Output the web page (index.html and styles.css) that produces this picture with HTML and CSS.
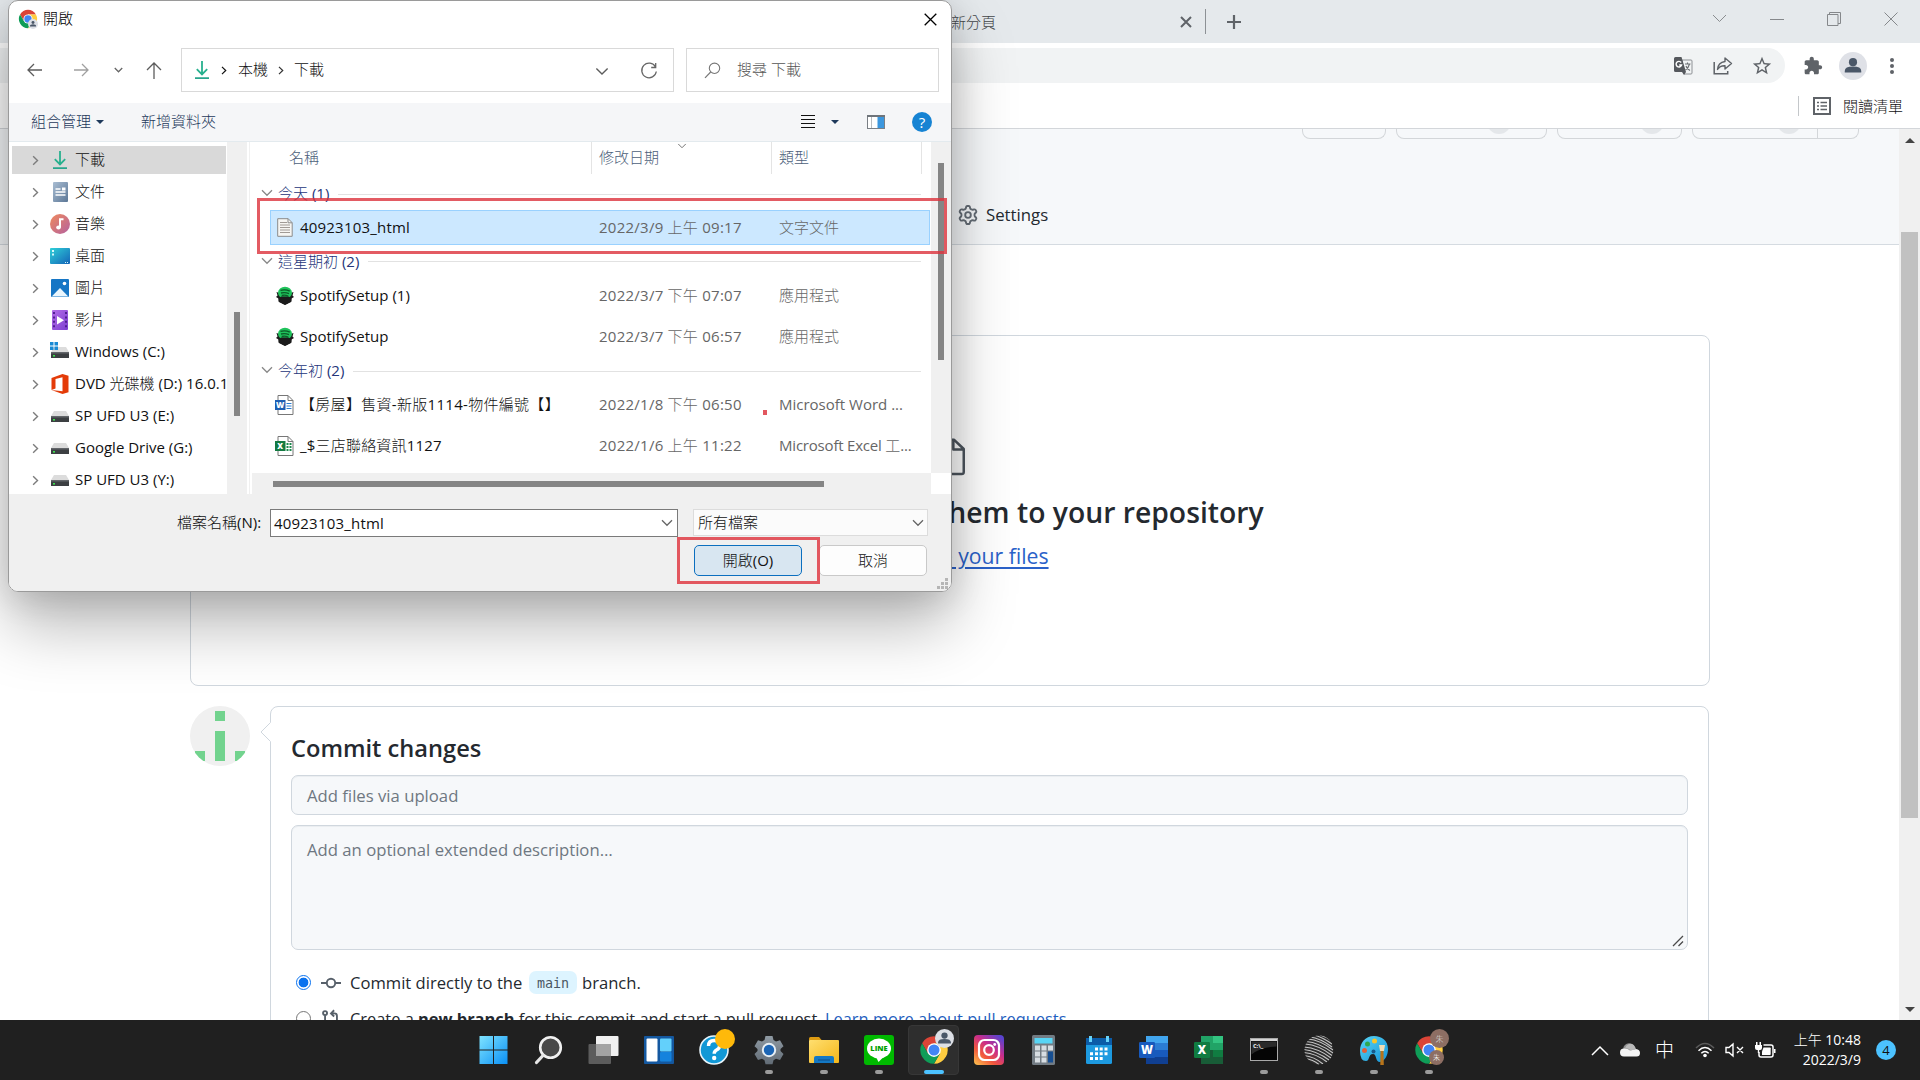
FILE: index.html
```html
<!DOCTYPE html>
<html lang="zh-Hant">
<head>
<meta charset="utf-8">
<title>開啟</title>
<link rel="stylesheet" href="styles.css">
</head>
<body>
<svg class="defs" width="0" height="0">
  <defs>
    <linearGradient id="g-win" x1="0" y1="0" x2="1" y2="1"><stop offset="0" stop-color="#7fe3ff"/><stop offset="1" stop-color="#0a90f5"/></linearGradient>
    <linearGradient id="g-music" x1="0" y1="0" x2="1" y2="1"><stop offset="0" stop-color="#f08a5d"/><stop offset="1" stop-color="#b4619f"/></linearGradient>
    <linearGradient id="g-desk" x1="0" y1="0" x2="1" y2="1"><stop offset="0" stop-color="#2fd0d8"/><stop offset="1" stop-color="#1464b8"/></linearGradient>
    <linearGradient id="g-doc" x1="0" y1="0" x2="1" y2="1"><stop offset="0" stop-color="#a9bdd2"/><stop offset="1" stop-color="#5c7796"/></linearGradient>
    <linearGradient id="g-vid" x1="0" y1="0" x2="1" y2="1"><stop offset="0" stop-color="#b36be8"/><stop offset="1" stop-color="#7d3fd0"/></linearGradient>
    <linearGradient id="g-fold" x1="0" y1="0" x2="1" y2="1"><stop offset="0" stop-color="#ffdf70"/><stop offset="1" stop-color="#f4b619"/></linearGradient>
    <linearGradient id="g-ig" x1="0" y1="1" x2=".8" y2="0"><stop offset="0" stop-color="#fdc84f"/><stop offset=".35" stop-color="#f2583c"/><stop offset=".65" stop-color="#c82d8c"/><stop offset="1" stop-color="#5a43cf"/></linearGradient>
    <linearGradient id="g-pal" x1="0" y1="0" x2="1" y2="1"><stop offset="0" stop-color="#58d5f5"/><stop offset="1" stop-color="#1593d8"/></linearGradient>
    <linearGradient id="g-gear" x1="0" y1="0" x2="0" y2="1"><stop offset="0" stop-color="#8f9aa3"/><stop offset="1" stop-color="#626c76"/></linearGradient>
    <symbol id="chrome" viewBox="0 0 48 48">
      <path fill="#db4437" d="M24 24L14.47 29.5 4.95 13A22 22 0 0 1 43.05 13H24z"/>
      <path fill="#ffcd40" d="M24 13H43.05A22 22 0 0 1 24 46L33.53 29.5 24 24z"/>
      <path fill="#0f9d58" d="M33.53 29.5L24 46A22 22 0 0 1 4.95 13L14.47 29.5 24 24z"/>
      <circle cx="24" cy="24" r="11" fill="#fff"/><circle cx="24" cy="24" r="8.8" fill="#4285f4"/>
    </symbol>
    <symbol id="dl" viewBox="0 0 16 20"><path d="M8 1v13M2.8 9.2L8 14.4l5.2-5.2" fill="none" stroke="#27b08e" stroke-width="1.8"/><path d="M1 18.2h14" stroke="#27a58c" stroke-width="1.8"/></symbol>
    <symbol id="right" viewBox="0 0 8 12"><path d="M1.3 1.2L6.3 6l-5 4.8" fill="none" stroke="currentColor" stroke-width="1.6"/></symbol>
    <symbol id="down" viewBox="0 0 12 8"><path d="M1 1.3l5 5 5-5" fill="none" stroke="currentColor" stroke-width="1.3"/></symbol>
    <symbol id="drive" viewBox="0 0 20 12"><path d="M4 0h12l3 5H1z" fill="#dcdcdc"/><rect x="1" y="5" width="18" height="6" fill="#3c3f42"/><rect x="1" y="5" width="18" height="1.5" fill="#63666a"/><rect x="3" y="8" width="2" height="1.6" fill="#3fe04f"/></symbol>
    <symbol id="spotify" viewBox="0 0 20 20"><path d="M1.500 6l3 1 .5-2h10l.5 2 3-1-1 3.500 1.500 1.500-2.500 1.500v3L12 18l-2 1-2-1-4.500-2.500v-3L1 11l1.500-1.500z" fill="#1b1b1b"/><ellipse cx="10" cy="6.800" rx="7" ry="6" fill="#1fc35b"/><path d="M3.500 12l3-1.500h7l3 1.500-.5 4-6 2.700L4 16z" fill="#1b1b1b"/><path d="M5.500 4.300q5-1.300 9.300.8M6 7q4.300-1 8 .7M6.700 9.500q3.500-.8 6.500.6" fill="none" stroke="#0b5c28" stroke-width="1.300"/></symbol>
    <symbol id="person" viewBox="0 0 20 20"><circle cx="10" cy="6.500" r="3.700" fill="currentColor"/><path d="M2.500 16v-1.500q0-4 7.500-4t7.500 4V16z" fill="currentColor"/></symbol>
  </defs>
</svg>

<main class="desktop">
  <section class="browser">
    <header class="tabs">
      <span class="tab-title">新分頁</span>
      <svg class="tab-x" width="12" height="12" viewBox="0 0 12 12"><path d="M1 1l10 10M11 1L1 11" stroke="#5f6368" stroke-width="2"/></svg>
      <i class="tab-sep"></i>
      <svg class="tab-new" width="16" height="16" viewBox="0 0 16 16"><path d="M8 1v14M1 8h14" stroke="#5f6368" stroke-width="2.200"/></svg>
      <div class="win-btns">
        <svg width="15" height="9" viewBox="0 0 15 9"><path d="M1 1l6.500 6.500L14 1" fill="none" stroke="#8a8d90"/></svg>
        <svg width="14" height="14" viewBox="0 0 14 14"><path d="M0 7.500h14" stroke="#85888b"/></svg>
        <svg width="14" height="14" viewBox="0 0 14 14"><path d="M.5 2.500h10.500v11H.5zM2.500 2.500v-2h11v11h-2.500" fill="none" stroke="#85888b"/></svg>
        <svg width="14" height="14" viewBox="0 0 14 14"><path d="M.5.5l13 13M13.500.5l-13 13" stroke="#85888b"/></svg>
      </div>
    </header>
    <div class="toolbar">
      <div class="omnibox">
        <svg width="19" height="18" viewBox="0 0 19 18"><path d="M8 3h9a1 1 0 0 1 1 1v12a1 1 0 0 1-1 1H10z" fill="#f1f3f4" stroke="#8d9094"/><path d="M1.500 0h6L12 15H1.500A1.500 1.500 0 0 1 0 13.500v-12A1.500 1.500 0 0 1 1.500 0z" fill="#55585d"/><path d="M8 15l2 3 2-3z" fill="#55585d"/><path d="M7.200 5.500A2.800 2.800 0 1 0 7.600 8H5.200" fill="none" stroke="#fff" stroke-width="1.400"/><path d="M11 7h5.500M13.500 5.500V7M15.500 7q-1 4-4 6M12 9q1 3 4 4.500" fill="none" stroke="#6b6e72" stroke-width="1.100"/></svg>
        <svg width="20" height="18" viewBox="0 0 20 18"><path d="M1.200 5v11.800h13.500V14" fill="none" stroke="#5f6368" stroke-width="1.500"/><path d="M12 1l6.500 5.500-6.500 5.500V8.800Q7 8.500 4.500 12.500 5 5.500 12 4.500z" fill="none" stroke="#5f6368" stroke-width="1.400" stroke-linejoin="round"/></svg>
        <svg class="star" width="22" height="22" viewBox="0 0 24 24"><path fill="#5f6368" d="M22 9.240l-7.190-.62L12 2 9.190 8.630 2 9.240l5.460 4.730L5.820 21 12 17.270 18.180 21l-1.630-7.030L22 9.240zM12 15.400l-3.760 2.270 1-4.280-3.320-2.880 4.380-.38L12 6.100l1.710 4.040 4.380.38-3.320 2.880 1 4.280L12 15.400z"/></svg>
      </div>
      <svg class="puzzle" width="20" height="20" viewBox="0 0 24 24"><path fill="#5f6368" d="M20.500 11H19V7c0-1.100-.9-2-2-2h-4V3.500C13 2.120 11.880 1 10.500 1S8 2.120 8 3.500V5H4c-1.100 0-1.990.9-1.990 2v3.800H3.500c1.490 0 2.700 1.210 2.700 2.700s-1.210 2.700-2.700 2.700H2V20c0 1.100.9 2 2 2h3.800v-1.500c0-1.490 1.210-2.700 2.700-2.700 1.490 0 2.700 1.210 2.700 2.700V22H17c1.100 0 2-.9 2-2v-4h1.500c1.380 0 2.500-1.120 2.500-2.500S21.880 11 20.500 11z"/></svg>
      <span class="profile"><svg width="22" height="22"><use href="#person"/></svg></span>
      <svg class="dots" width="4" height="16" viewBox="0 0 4 16"><g fill="#5f6368"><circle cx="2" cy="2" r="2"/><circle cx="2" cy="8" r="2"/><circle cx="2" cy="14" r="2"/></g></svg>
    </div>
    <div class="bookmarks">
      <i class="bm-sep"></i>
      <svg width="18" height="18" viewBox="0 0 18 18"><rect x="1" y="1" width="16" height="16" fill="none" stroke="#5f6368" stroke-width="2"/><path d="M4 5.500h2M4 9h2M4 12.500h2M7.500 5.500H14M7.500 9H14M7.500 12.500H14" stroke="#5f6368" stroke-width="1.500"/></svg>
      <span>閱讀清單</span>
    </div>
    <div class="viewport">
      <div class="page">
        <div class="repo-head">
          <div class="actions">
            <span class="act a1"></span>
            <span class="act a2"><i></i></span>
            <span class="act a3"><i></i></span>
            <span class="act a4"><i></i><b></b></span>
          </div>
          <div class="settings">
            <svg width="20" height="20" viewBox="0 0 16 16"><path fill="#656d76" d="M8 0a8.200 8.200 0 0 1 .701.031C9.444.095 9.990.645 10.160 1.290l.288 1.107c.018.066.079.158.212.224.231.114.454.243.668.386.123.082.233.09.299.071l1.103-.303c.644-.176 1.392.021 1.820.63.27.385.506.792.704 1.218.315.675.111 1.422-.364 1.891l-.814.806c-.049.048-.098.147-.088.294.016.257.016.515 0 .772-.01.147.038.246.088.294l.814.806c.475.469.679 1.216.364 1.891a7.977 7.977 0 0 1-.704 1.217c-.428.61-1.176.807-1.820.63l-1.102-.302c-.067-.019-.177-.011-.3.071a5.909 5.909 0 0 1-.668.386c-.133.066-.194.158-.211.224l-.29 1.106c-.168.646-.715 1.196-1.458 1.260a8.006 8.006 0 0 1-1.402 0c-.743-.064-1.289-.614-1.458-1.260l-.289-1.106c-.018-.066-.079-.158-.212-.224a5.738 5.738 0 0 1-.668-.386c-.123-.082-.233-.09-.299-.071l-1.103.303c-.644.176-1.392-.021-1.820-.63a8.120 8.120 0 0 1-.704-1.218c-.315-.675-.111-1.422.363-1.891l.815-.806c.05-.048.098-.147.088-.294a6.214 6.214 0 0 1 0-.772c.01-.147-.038-.246-.088-.294l-.815-.806C.635 6.045.431 5.298.746 4.623a7.920 7.920 0 0 1 .704-1.217c.428-.61 1.176-.807 1.820-.63l1.102.302c.067.019.177.011.3-.071.214-.143.437-.272.668-.386.133-.066.194-.158.211-.224l.29-1.106C6.009.645 6.556.095 7.299.03 7.530.01 7.764 0 8 0Zm-.571 1.525c-.036.003-.108.036-.137.146l-.289 1.105c-.147.561-.549.967-.998 1.189-.173.086-.34.183-.5.29-.417.278-.97.423-1.529.27l-1.103-.303c-.109-.03-.175.016-.195.045-.22.312-.412.644-.573.99-.014.031-.021.11.059.19l.815.806c.411.406.562.957.53 1.456a4.709 4.709 0 0 0 0 .582c.032.499-.119 1.050-.53 1.456l-.815.806c-.081.08-.073.159-.059.19.162.346.353.677.573.989.02.03.085.076.195.046l1.102-.303c.56-.153 1.113-.008 1.530.27.161.107.328.204.501.29.447.222.85.629.997 1.189l.289 1.105c.029.109.101.143.137.146a6.600 6.600 0 0 0 1.142 0c.036-.003.108-.036.137-.146l.289-1.105c.147-.561.549-.967.998-1.189.173-.086.34-.183.5-.29.417-.278.97-.423 1.529-.27l1.103.303c.109.029.175-.016.195-.045.22-.313.411-.644.573-.99.014-.031.021-.11-.059-.19l-.815-.806c-.411-.406-.562-.957-.53-1.456a4.709 4.709 0 0 0 0-.582c-.032-.499.119-1.050.53-1.456l.815-.806c.081-.08.073-.159.059-.19a6.464 6.464 0 0 0-.573-.989c-.02-.03-.085-.076-.195-.046l-1.102.303c-.56.153-1.113.008-1.530-.27a4.440 4.440 0 0 0-.501-.29c-.447-.222-.85-.629-.997-1.189l-.289-1.105c-.029-.11-.101-.143-.137-.146a6.600 6.600 0 0 0-1.142 0ZM11 8a3 3 0 1 1-6 0 3 3 0 0 1 6 0ZM9.500 8a1.500 1.500 0 1 0-3.001.001A1.500 1.500 0 0 0 9.500 8Z"/></svg>
            <span>Settings</span>
          </div>
        </div>
        <div class="upload">
          <svg width="40" height="40" viewBox="0 0 24 24"><path d="M14.500 1.700H5A1.300 1.300 0 0 0 3.750 3v18A1.300 1.300 0 0 0 5 22.250h14A1.300 1.300 0 0 0 20.250 21V7.200zM14 1.700V7.500h6.200" fill="none" stroke="#4d555e" stroke-width="1.500" stroke-linejoin="round"/></svg>
          <h2>Drag files here to add them to your repository</h2>
          <p>Or <u>choose your files</u></p>
        </div>
        <div class="commit-row">
          <svg class="avatar" width="60" height="60" viewBox="0 0 60 60"><clipPath id="av"><circle cx="30" cy="30" r="30"/></clipPath><g clip-path="url(#av)"><rect width="60" height="60" fill="#f0f0f0"/><path fill="#72d38e" d="M25 5h10v10H25zM25 25h10v30H25zM5 45h10v10H5zM45 45h10v10H45z"/></g></svg>
          <form class="commit">
            <svg class="caret" width="11" height="20" viewBox="0 0 11 20"><path d="M11 0L1 10l10 10z" fill="#fff"/><path d="M10.500.5L1 10l9.500 9.500" fill="none" stroke="#d0d7de"/></svg>
            <h3>Commit changes</h3>
            <div class="field">Add files via upload</div>
            <div class="field area">Add an optional extended description…<svg width="12" height="12" viewBox="0 0 12 12"><path d="M1 11L11 1M6.500 11L11 6.500" stroke="#4a4a4a" stroke-width="1.300"/></svg></div>
            <div class="choice">
              <i class="radio on"></i>
              <svg width="20" height="20" viewBox="0 0 20 20"><circle cx="10" cy="10" r="4.200" fill="none" stroke="#57606a" stroke-width="1.900"/><path d="M0 10h5.800M14.200 10H20" stroke="#57606a" stroke-width="1.900"/></svg>
              <span class="c1">Commit directly to the</span><code>main</code><span class="c2">branch.</span>
            </div>
            <div class="choice second">
              <i class="radio"></i>
              <svg width="20" height="20" viewBox="0 0 16 16"><g fill="none" stroke="#57606a" stroke-width="1.500"><circle cx="3.250" cy="3.250" r="1.600"/><circle cx="3.250" cy="12.750" r="1.600"/><circle cx="12.750" cy="12.750" r="1.600"/><path d="M3.250 5v6M12.750 11V5.500q0-2-2-2H8.500M10.500 1L8 3.500 10.500 6"/></g></svg>
              <span class="c3">Create a <b>new branch</b> for this commit and start a pull request.</span><a class="c4">Learn more about pull requests.</a>
            </div>
          </form>
        </div>
      </div>
      <div class="vbar"><i class="up"></i><i class="thumb"></i><i class="dn"></i></div>
    </div>
  </section>

  <footer class="taskbar">
    <div class="apps">
      <span class="app"><svg width="30" height="30" viewBox="0 0 30 30"><path fill="url(#g-win)" d="M.5 1H14v13.500H.5zM15 1h13.500v13.500H15zM.5 15.500H14V29H.5zM15 15.500h13.500V29H15z"/></svg></span>
      <span class="app"><svg width="30" height="30" viewBox="0 0 30 30"><circle cx="16.500" cy="12.500" r="10.300" fill="#484848" stroke="#f0f0f0" stroke-width="2.600"/><path d="M9 20.500l-6.500 7" stroke="#e6e6e6" stroke-width="3.200" stroke-linecap="round"/></svg></span>
      <span class="app"><svg width="32" height="30" viewBox="0 0 32 30"><rect x="8" y="1" width="22.500" height="20" rx="1" fill="#f0f0f0"/><rect x=".5" y="9" width="22.500" height="20" rx="1" fill="#5c5c5c"/><path d="M8 9h15v12H8z" fill="#a3a3a3"/></svg></span>
      <span class="app"><svg width="30" height="30" viewBox="0 0 30 30"><rect y="1" width="30" height="28" rx="1" fill="#1458a0"/><rect x="2.500" y="3.500" width="11" height="23" rx="1" fill="#fff"/><rect x="16" y="3.500" width="11.500" height="13" rx="1" fill="#63d0fb"/><rect x="16" y="17" width="11.500" height="9.500" rx="1" fill="#1583dd"/></svg></span>
      <span class="app"><svg width="30" height="30" viewBox="0 0 30 30"><circle cx="15" cy="15" r="14" fill="#1198d6" stroke="#e8f4fa" stroke-width="1.600"/><path d="M9.500 11q0-5.500 5.700-5.500 5.500 0 5.500 5 0 3-3.200 4.500-2.300 1.200-2.300 3.700" fill="none" stroke="#fff" stroke-width="3.400"/><circle cx="15.200" cy="23" r="2.200" fill="#fff"/></svg><i class="dot-badge"></i></span>
      <span class="app run"><svg width="30" height="30" viewBox="0 0 30 30"><path fill="url(#g-gear)" d="M11.500 1h7l1 4 2.500 1.400 4-1.100 3.500 6-3 2.800v2l3 2.900-3.500 6-4-1.200-2.500 1.500-1 4h-7l-1-4L8 23.800 4 25 .5 19l3-2.900v-2l-3-2.800 3.500-6 4 1.100L10.500 5z"/><circle cx="15" cy="15" r="6.200" fill="#1b65b5" stroke="#e6eef4" stroke-width="2"/></svg></span>
      <span class="app run"><svg width="30" height="28" viewBox="0 0 30 28"><path d="M0 2.500Q0 1 1.500 1H10l3 3.500H0z" fill="#dd9b12"/><rect y="4" width="30" height="23" rx="1" fill="url(#g-fold)"/><path d="M5 27v-5q0-2 2-2h16q2 0 2 2v5z" fill="#1478c4"/><path d="M9 24h12" stroke="#0f5b9c" stroke-width="1.500"/></svg></span>
      <span class="app run"><svg width="30" height="30" viewBox="0 0 30 30"><rect width="30" height="30" rx="3" fill="#00b900"/><ellipse cx="15" cy="13.500" rx="12" ry="10" fill="#fff"/><path d="M12 22l2.500 5 6-6z" fill="#fff"/><text x="15" y="16.300" font-size="7.500" class="glyph" text-anchor="middle" fill="#00a000">LINE</text></svg></span>
      <span class="app active"><svg width="30" height="30"><use href="#chrome"/></svg><i class="user-badge"><svg width="17" height="17"><use href="#person"/></svg></i></span>
      <span class="app"><svg width="30" height="30" viewBox="0 0 30 30"><rect width="30" height="30" rx="4" fill="url(#g-ig)"/><g fill="none" stroke="#fff" stroke-width="2.200"><rect x="5" y="5" width="20" height="20" rx="5.500"/><circle cx="15" cy="15" r="4.800"/></g><circle cx="20.700" cy="9.500" r="1.400" fill="#fff"/></svg></span>
      <span class="app"><svg width="24" height="30" viewBox="0 0 24 30"><rect width="23" height="30" rx="1.500" fill="#727b83"/><rect x="2.500" y="3" width="18" height="5.500" fill="#58d5f5"/><path fill="#d7dde2" d="M3 10.500h5v5H3zM9.500 10.500h5v5h-5zM16 10.500h5v5h-5zM3 16.500h5v5H3zM9.500 16.500h5v5h-5zM3 22.500h5v5H3zM9.500 22.500h5v5h-5z"/><path fill="#174f92" d="M16 16.500h5v11h-5z"/></svg></span>
      <span class="app"><svg width="26" height="30" viewBox="0 0 26 30"><rect y="3" width="26" height="26" rx="1.500" fill="#1d9ae0"/><path d="M0 3h26v7H0z" fill="#0b5ca8"/><path fill="#67d3fa" d="M3 1h3v6H3zM20 1h3v6h-3z"/><path fill="#fff" d="M9 12.500h3v3H9zM13.700 12.500h3v3h-3zM18.500 12.500h3v3h-3zM4 17.200h3v3H4zM9 17.200h3v3H9zM13.700 17.200h3v3h-3zM18.500 17.200h3v3h-3zM4 22h3v3H4zM9 22h3v3H9zM13.700 22h3v3h-3z"/></svg></span>
      <span class="app"><svg width="30" height="28" viewBox="0 0 30 28"><path fill="#41a5ee" d="M7 0h22v7H7z"/><path fill="#2b7cd3" d="M7 7h22v7H7z"/><path fill="#185abd" d="M7 14h22v7H7z"/><path fill="#103f91" d="M7 21h22v7H7z"/><rect y="6" width="16" height="16" rx="1.200" fill="#185abd"/><text x="8" y="18" font-size="11.500" class="glyph" text-anchor="middle" fill="#fff">W</text></svg></span>
      <span class="app"><svg width="30" height="28" viewBox="0 0 30 28"><path fill="#21a366" d="M7 0h12v14H7z"/><path fill="#33c481" d="M19 0h10v7H19z"/><path fill="#21a366" d="M19 7h10v7H19z"/><path fill="#107c41" d="M19 14h10v7H19z"/><path fill="#185c37" d="M7 14h12v7h10v7H7z"/><rect y="6" width="16" height="16" rx="1.200" fill="#107c41"/><text x="8" y="18" font-size="11.500" class="glyph" text-anchor="middle" fill="#fff">X</text></svg></span>
      <span class="app run"><svg width="28" height="24" viewBox="0 0 28 24"><rect x=".5" y=".5" width="27" height="22" fill="#050505" stroke="#a9a9a9"/><path d="M1 2h26" stroke="#d4d4d4" stroke-width="2"/><path d="M1.500 3.500h25v5q-15 0-25 8z" fill="#2a2a2a"/><text x="3" y="9.500" font-size="5.500" class="glyph" fill="#ddd">C:\_</text></svg></span>
      <span class="app run"><svg width="30" height="30" viewBox="0 0 30 30"><clipPath id="sph"><circle cx="15" cy="15" r="14.500"/></clipPath><g clip-path="url(#sph)"><rect width="30" height="30" fill="#2c2c2c"/><g fill="none" stroke="#c4c4c4" stroke-width="1.100"><path d="M10 0q8 2 18 9M6 2q10 1 22 10M4 4q12 1 25 11M2 6.500q13 1 27 11.500M1 9q14 1 27 11.500M0 12q14 1 27 11M0 14.500q13 1.500 25 10.500M0 17.500q12 1 23 9.500M0 20.500q10 1 19 8.500M1 23.500q8 1 14 6M16 0q7 2 12 6"/></g></g></svg></span>
      <span class="app run"><svg width="30" height="30" viewBox="0 0 30 30"><path d="M15 1C6 1 1 8 1 16q0 10 6 10c4 0 2-7 7-7 4 0 2 8 7 8 5-1 8-7 8-13C29 6 23 1 15 1z" fill="url(#g-pal)"/><circle cx="15.500" cy="6" r="2.500" fill="#f7c52b"/><circle cx="8.500" cy="9" r="2.500" fill="#2fa84f"/><circle cx="5.500" cy="15.500" r="2.500" fill="#e0603a"/><circle cx="14.500" cy="16.500" r="2" fill="#165a8c"/><path d="M21.500 16h3l.3 14h-3.500z" fill="#b8741a"/><path d="M20 10h6l-1 6h-4z" fill="#f0dcb4"/></svg></span>
      <span class="app run"><svg width="30" height="30"><use href="#chrome"/></svg><i class="zhu z1">朱</i><i class="zhu z2">朱</i></span>
    </div>
    <div class="tray">
      <svg class="t1" width="18" height="11" viewBox="0 0 18 11"><path d="M1 10l8-8 8 8" fill="none" stroke="#fff" stroke-width="1.500"/></svg>
      <svg class="t2" width="20" height="14" viewBox="0 0 20 14"><circle cx="9" cy="6" r="5.800" fill="#8f8f8f"/><path d="M4 13.500a4 4 0 0 1 0-8q3-.5 6 2L16 6q4 .5 4 4 0 3.500-3.500 3.500z" fill="#f5f5f5"/><path d="M9 1q5-1 7 5l-5 1.500Q8 5 5 5.300 6 2 9 1z" fill="#b9b9b9"/></svg>
      <span class="ime">中</span>
      <svg class="t3" width="20" height="16" viewBox="0 0 20 16"><g fill="none" stroke-width="1.500"><path d="M1 6q9-9 18 0" stroke="#5a5a5a"/><path d="M3.500 8.700q6.500-6.500 13 0M6.300 11.300q3.700-3.500 7.400 0" stroke="#fff"/></g><circle cx="10" cy="13.500" r="1.800" fill="#fff"/></svg>
      <svg class="t4" width="20" height="16" viewBox="0 0 20 16"><path d="M1 5.500h3L8 2v12l-4-3.500H1zM12 5l6 6M18 5l-6 6" fill="none" stroke="#fff" stroke-width="1.400"/></svg>
      <svg class="t5" width="21" height="17" viewBox="0 0 21 17"><path d="M8.500 3H16q2 0 2 2v8q0 2-2 2H6q-2 0-2-2v-3" fill="none" stroke="#fff" stroke-width="1.500"/><path d="M7 9.500L8.500 5.500H15q.7 0 .7.700v6q0 .7-.7.700H7z" fill="#fff"/><path d="M19 7h1.500v4H19zM0 3h7v3q0 2-2 2H2Q0 8 0 6zM1 0h1.500v3H1zM4.500 0H6v3H4.500zM2.800 8h1.400v3H2.800z" fill="#fff"/></svg>
      <div class="clock"><span>上午 10:48</span><span>2022/3/9</span></div>
      <i class="notif">4</i>
    </div>
  </footer>

  <section class="dialog">
    <header class="title">
      <span class="logo"><svg width="20" height="20"><use href="#chrome"/></svg><i><svg width="8" height="8"><use href="#person"/></svg></i></span>
      <span class="cjk">開啟</span>
      <svg class="close" width="13" height="13" viewBox="0 0 13 13"><path d="M.7.7l11.600 11.600M12.300.7L.7 12.300" stroke="#000" stroke-width="1.300"/></svg>
    </header>
    <div class="nav">
      <svg class="n1" width="16" height="14" viewBox="0 0 16 14"><path d="M7 1L1 7l6 6M1 7h14" fill="none" stroke="#5c5c5c" stroke-width="1.300"/></svg>
      <svg class="n2" width="16" height="14" viewBox="0 0 16 14"><path d="M9 1l6 6-6 6M15 7H1" fill="none" stroke="#a0a0a0" stroke-width="1.300"/></svg>
      <svg class="n3" width="9" height="6" viewBox="0 0 12 8"><path d="M1 1.300l5 5 5-5" fill="none" stroke="#666" stroke-width="1.700"/></svg>
      <svg class="n4" width="16" height="17" viewBox="0 0 16 17"><path d="M1 8l7-7 7 7M8 1v16" fill="none" stroke="#5c5c5c" stroke-width="1.300"/></svg>
      <div class="path">
        <svg width="16" height="20"><use href="#dl"/></svg>
        <svg class="s1" width="6" height="9"><use href="#right"/></svg><span class="cjk">本機</span>
        <svg class="s2" width="6" height="9"><use href="#right"/></svg><span class="cjk">下載</span>
        <svg class="drop" width="14" height="9" viewBox="0 0 12 8"><path d="M1 1.300l5 5 5-5" fill="none" stroke="#5c5c5c" stroke-width="1.200"/></svg>
        <svg class="reload" width="18" height="18" viewBox="0 0 18 18"><path d="M15.500 5A7.300 7.300 0 1 0 16.300 9.500M15.700 1v4.500h-4.500" fill="none" stroke="#666" stroke-width="1.300"/></svg>
      </div>
      <div class="find">
        <svg width="17" height="17" viewBox="0 0 17 17"><circle cx="10.500" cy="6.300" r="5.200" fill="none" stroke="#777" stroke-width="1.100"/><path d="M6.700 10L1 15.800" stroke="#777" stroke-width="1.200"/></svg>
        <span class="cjk">搜尋 下載</span>
      </div>
    </div>
    <div class="cmd">
      <span class="cjk">組合管理</span><i class="tri"></i><span class="cjk newf">新增資料夾</span>
      <svg class="lines" width="14" height="14" viewBox="0 0 14 14"><path d="M0 .5h14M0 4.500h14M0 8.500h14M0 12.500h14" stroke="#111" stroke-width="1"/></svg><i class="tri t"></i>
      <svg class="pane" width="18" height="14" viewBox="0 0 18 14"><rect x=".5" y=".5" width="17" height="13" fill="#fff" stroke="#7a7f85"/><path d="M0 1h18" stroke="#6f757b" stroke-width="2"/><path d="M10.500 2H17v11h-6.500z" fill="#3c97de"/><path d="M4.500 2v11" stroke="#b9bdc1"/></svg>
      <span class="help">?</span>
    </div>
    <div class="body">
      <ul class="tree">
        <li class="sel"><svg class="chev"><use href="#right"/></svg><span class="ib"><svg width="16" height="20"><use href="#dl"/></svg></span><span class="cjk">下載</span></li>
        <li><svg class="chev"><use href="#right"/></svg><span class="ib"><svg width="15" height="20" viewBox="0 0 15 20"><rect width="15" height="20" rx="1" fill="url(#g-doc)"/><path d="M2.500 7h5M2.500 10h10M2.500 13h10" stroke="#fff" stroke-width="1.500"/><path d="M9 5.500h3.500v3H9z" fill="#fff"/></svg></span><span class="cjk">文件</span></li>
        <li><svg class="chev"><use href="#right"/></svg><span class="ib"><svg width="20" height="20" viewBox="0 0 20 20"><circle cx="10" cy="10" r="10" fill="url(#g-music)"/><ellipse cx="8.500" cy="13.500" rx="2.300" ry="2" fill="#fff"/><path d="M10 13.500V5.200h3.500" fill="none" stroke="#fff" stroke-width="2"/></svg></span><span class="cjk">音樂</span></li>
        <li><svg class="chev"><use href="#right"/></svg><span class="ib"><svg width="20" height="16" viewBox="0 0 20 16"><rect width="20" height="16" rx="1" fill="url(#g-desk)"/><path fill="#d5f7fa" d="M2 2h2v2H2zM2 5.500h2v2H2zM15 14h1v1h-1zM17 14h1v1h-1z"/></svg></span><span class="cjk">桌面</span></li>
        <li><svg class="chev"><use href="#right"/></svg><span class="ib"><svg width="18" height="18" viewBox="0 0 18 18"><rect width="18" height="18" rx="1" fill="#1676c5"/><path d="M.7 17.500L9 9l8.300 8.500z" fill="#eaf6fd"/><circle cx="13.500" cy="4.500" r="1.800" fill="#fff"/></svg></span><span class="cjk">圖片</span></li>
        <li><svg class="chev"><use href="#right"/></svg><span class="ib"><svg width="16" height="20" viewBox="0 0 16 20"><rect width="16" height="20" rx="1" fill="url(#g-vid)"/><path d="M2 2v16M14 2v16" stroke="#4a1a8a" stroke-width="1.800" stroke-dasharray="2 2.400"/><path d="M5 6v8.500l7-4.200z" fill="#fff"/></svg></span><span class="cjk">影片</span></li>
        <li><svg class="chev"><use href="#right"/></svg><span class="ib"><svg class="drv" width="20" height="12"><use href="#drive"/></svg><svg class="flag" width="8" height="8" viewBox="0 0 8 8"><path fill="#1a8ad4" d="M0 0h3.500v3.500H0zM4.500 0H8v3.500H4.500zM0 4.500h3.500V8H0zM4.500 4.500H8V8H4.500z"/></svg></span><span class="lat">Windows (C:)</span></li>
        <li><svg class="chev"><use href="#right"/></svg><span class="ib"><svg width="18" height="20" viewBox="0 0 18 20"><path d="M11.500 0L17.500 1.700V18.300L11.500 20 .500 16 11.500 17.300V3.200L4.500 5V14.500L.5 16V4z" fill="#e43b08"/></svg></span><span class="lat">DVD 光碟機 (D:) 16.0.1</span></li>
        <li><svg class="chev"><use href="#right"/></svg><span class="ib"><svg class="drv" width="20" height="12"><use href="#drive"/></svg></span><span class="lat">SP UFD U3 (E:)</span></li>
        <li><svg class="chev"><use href="#right"/></svg><span class="ib"><svg class="drv" width="20" height="12"><use href="#drive"/></svg></span><span class="lat">Google Drive (G:)</span></li>
        <li><svg class="chev"><use href="#right"/></svg><span class="ib"><svg class="drv" width="20" height="12"><use href="#drive"/></svg></span><span class="lat">SP UFD U3 (Y:)</span></li>
      </ul>
      <div class="tree-bar"><i></i></div>
      <div class="files">
        <div class="list">
          <div class="cols"><span>名稱</span><span>修改日期<svg width="10" height="6" viewBox="0 0 12 8"><path d="M1 1.300l5 5 5-5" fill="none" stroke="#666" stroke-width="1.200"/></svg></span><span>類型</span></div>
          <div class="group g1"><svg width="12" height="8"><use href="#down"/></svg>今天 (1)<hr></div>
          <div class="file on"><svg width="16" height="19" viewBox="0 0 16 19"><path d="M.7.7h10.500l4 4v13.600H.7z" fill="#f6f5f2" stroke="#8b8b8b"/><path d="M11 .7v4.100h4" fill="none" stroke="#8b8b8b"/><path d="M3 4.500h7M3 7h10M3 9.500h10M3 12h10M3 14.500h10" stroke="#a09a95"/></svg><span class="nm num">40923103_html</span><span class="dt">2022/3/9 上午 09:17</span><span>文字文件</span></div>
          <div class="group g2"><svg width="12" height="8"><use href="#down"/></svg>這星期初 (2)<hr></div>
          <div class="file"><svg width="20" height="20"><use href="#spotify"/></svg><span class="nm">SpotifySetup (1)</span><span class="dt">2022/3/7 下午 07:07</span><span>應用程式</span></div>
          <div class="file"><svg width="20" height="20"><use href="#spotify"/></svg><span class="nm">SpotifySetup</span><span class="dt">2022/3/7 下午 06:57</span><span>應用程式</span></div>
          <div class="group g3"><svg width="12" height="8"><use href="#down"/></svg>今年初 (2)<hr></div>
          <div class="file"><svg width="19" height="20" viewBox="0 0 19 20"><path d="M3 .5h10l5 5v14H3z" fill="#fff" stroke="#777"/><path d="M13 .5v5h5" fill="none" stroke="#777"/><path d="M11.500 8.500h5M11.500 11h5M11.500 13.500h5" stroke="#2b7cd3"/><rect y="5" width="10.500" height="10" fill="#1e5fb3"/><text x="5.200" y="13" font-size="8" class="glyph" text-anchor="middle" fill="#fff">W</text></svg><span class="nm house">【房屋】售資-新版1114-物件編號【】</span><span class="dt">2022/1/8 下午 06:50</span><span>Microsoft Word ...</span></div>
          <div class="file"><svg width="19" height="20" viewBox="0 0 19 20"><path d="M3 .5h10l5 5v14H3z" fill="#fff" stroke="#777"/><path d="M13 .5v5h5" fill="none" stroke="#777"/><path d="M11.500 8h2M14.500 8h2M11.500 11h2M14.500 11h2M11.500 14h2M14.500 14h2" stroke="#1d8a4e" stroke-width="1.800"/><rect y="5" width="10.500" height="10" fill="#147a42"/><text x="5.200" y="13" font-size="8" class="glyph" text-anchor="middle" fill="#fff">X</text></svg><span class="nm num">_$三店聯絡資訊1127</span><span class="dt">2022/1/6 上午 11:22</span><span class="xl">Microsoft Excel 工...</span></div>
        </div>
        <div class="fv"><i></i></div>
        <div class="fh"><i></i></div>
      </div>
    </div>
    <div class="foot">
      <div class="frow">
        <label>檔案名稱(N):</label>
        <div class="name">40923103_html<svg width="12" height="8"><use href="#down"/></svg></div>
        <div class="kind"><span class="lat">所有檔案</span><svg width="12" height="8"><use href="#down"/></svg></div>
      </div>
      <div class="fbtn"><button class="open" type="button">開啟(O)</button><button type="button">取消</button></div>
      <svg class="grip" width="11" height="11" viewBox="0 0 11 11"><path fill="#b5b5b5" d="M8 0h3v3H8zM4 4h3v3H4zM8 4h3v3H8zM0 8h3v3H0zM4 8h3v3H4zM8 8h3v3H8z"/></svg>
    </div>
  </section>
  <i class="mark m1"></i><i class="mark m2"></i><i class="mark m3"></i>
</main>
</body>
</html>
```
FILE: styles.css
```css
* { box-sizing: border-box; }
body { margin: 0; background: #fff; color: #111; font: 14px/20px "Open Sans", "Noto Sans CJK TC Light", "Noto Sans CJK TC", sans-serif; overflow: hidden; }
h2, h3, p, ul { margin: 0; padding: 0; }
svg { display: block; flex: none; }
i { font-style: normal; }
.defs { position: absolute; }
.glyph { font-family: "Open Sans", sans-serif; font-weight: 800; }
.desktop { position: relative; width: 1920px; height: 1080px; display: flex; flex-direction: column; overflow: hidden; }
.browser { height: 1020px; display: flex; flex-direction: column; overflow: hidden; }

/* browser chrome */
.tabs { height: 43px; flex: none; background: #e5e9ec; display: flex; align-items: center; padding-left: 951px; }
.tab-title { width: 229px; font-size: 15px; font-weight: 300; color: #44474a; }
.tab-sep { width: 1px; height: 25px; background: #8d9195; margin: 0 20px 0 13px; }
.win-btns { margin: -6px 22px 0 auto; display: flex; align-items: center; gap: 43px; }
.toolbar { height: 45px; flex: none; background: #fff; display: flex; align-items: center; }
.omnibox { width: 1785px; height: 35px; background: #f1f3f4; border-radius: 0 18px 18px 0; display: flex; align-items: center; justify-content: flex-end; padding-right: 12px; gap: 20px; }
.star { margin-left: -2px; }
.puzzle { margin-left: 18px; }
.profile { width: 28px; height: 28px; border-radius: 50%; background: #dfe1e7; color: #4a5768; display: flex; align-items: center; justify-content: center; margin-left: 16px; }
.dots { margin-left: 23px; }
.bookmarks { height: 41px; flex: none; border-bottom: 1px solid #d3d6da; display: flex; align-items: center; justify-content: flex-end; padding: 0 17px 4px 0; font-size: 15px; }
.bm-sep { width: 1px; height: 20px; background: #c4c7ca; margin-right: 14px; }
.bookmarks span { margin-left: 12px; width: 60px; white-space: nowrap; }

/* repository page */
.viewport { flex: 1; min-height: 0; display: flex; }
.page { width: 1899px; height: 891px; overflow: hidden; }
.repo-head { height: 116px; background: #f6f8fa; border-bottom: 1px solid #d5dbe1; }
.actions { display: flex; gap: 10px; padding-left: 1302px; height: 10px; }
.act { position: relative; border: 1px solid #d3d6d9; border-top: 0; border-radius: 0 0 8px 8px; height: 10px; display: flex; justify-content: flex-end; overflow: hidden; }
.act i { width: 24px; height: 24px; border-radius: 50%; background: #e4e7ea; margin-top: -19px; }
.a1 { width: 84px; } .a2 { width: 151px; padding-right: 35px; } .a3 { width: 125px; padding-right: 17px; } .a4 { width: 167px; }
.a4 b { width: 1px; height: 10px; background: #d3d6d9; margin: 0 40px 0 16px; }
.settings { display: flex; align-items: center; gap: 8px; padding: 65px 0 0 958px; font-size: 16.800px; color: #24292f; }
.settings span { padding-top: 1px; }
.upload { width: 1520px; height: 351px; margin: 90px 0 0 190px; border: 1px solid #d0d7de; border-radius: 8px; display: flex; flex-direction: column; align-items: center; padding-top: 101px; color: #24292f; }
.upload h2 { font-size: 28.300px; line-height: 40px; font-weight: 600; margin-top: 15px; white-space: nowrap; }
.upload p { font-size: 21.200px; line-height: 30px; color: #2b62c9; margin-top: 9px; }
.upload u { text-underline-offset: 3px; text-decoration-thickness: 2px; }
.commit-row { display: flex; margin: 20px 0 0 190px; }
.commit { position: relative; width: 1439px; height: 400px; margin-left: 20px; border: 1px solid #d0d7de; border-radius: 8px; padding: 23px 20px; }
.caret { position: absolute; left: -11px; top: 15px; }
.commit h3 { font-size: 23.650px; line-height: 36px; font-weight: 600; color: #24292f; }
.field { height: 40px; margin-top: 9px; border: 1px solid #d0d7de; border-radius: 7px; background: #f6f8fa; padding: 0 15px; font-size: 16.700px; line-height: 39px; color: #6e7781; box-shadow: inset 0 1px 0 rgba(208,215,222,.3); }
.area { position: relative; height: 125px; margin-top: 10px; line-height: 47px; }
.area svg { position: absolute; right: 3px; bottom: 2px; }
.choice { display: flex; align-items: center; height: 23px; margin-top: 21px; padding-left: 5px; font-size: 16.600px; color: #24292f; white-space: nowrap; }
.choice.second { margin-top: 13px; font-size: 16.400px; }
.radio { width: 15px; height: 15px; border: 1px solid #767676; border-radius: 50%; background: #fff; margin-right: 10px; }
.radio.on { border: 1.500px solid #0a72ef; background: radial-gradient(circle, #0a72ef 4.600px, #fff 5.200px); }
.c1 { margin-left: 9px; width: 179px; } .c2 { margin-left: 5px; }
.c3 { margin-left: 9px; width: 475px; } .c4 { color: #1f5fc0; }
code { width: 48px; height: 23px; border-radius: 7px; background: #ddf4ff; font: 13.400px/26px "DejaVu Sans Mono", monospace; color: #4b5763; text-align: center; }
.vbar { width: 21px; background: #f0f0f0; display: flex; flex-direction: column; align-items: center; }
.vbar i { flex: none; }
.up { border: 5px solid transparent; border-top: 0; border-bottom-color: #444; margin-top: 9px; }
.thumb { width: 17px; height: 586px; background: #c1c1c1; margin-top: 89px; }
.dn { border: 5px solid transparent; border-bottom: 0; border-top-color: #444; margin-top: 189px; }

/* taskbar */
.taskbar { position: relative; height: 60px; background: #202020; display: flex; align-items: center; padding-left: 466px; color: #fff; }
.apps { display: flex; }
.app { position: relative; width: 55px; height: 60px; display: flex; align-items: center; justify-content: center; }
.run::after, .active::after { content: ""; position: absolute; left: 24px; bottom: 6px; width: 8px; height: 4px; border-radius: 2px; background: #9b9b9b; }
.active::after { left: 18px; width: 20px; background: #4cc2ff; }
.active::before { content: ""; position: absolute; inset: 5px 2px; border-radius: 4px; background: #2e2e2e; border: 1px solid #373737; }
.app svg { position: relative; }
.dot-badge { position: absolute; width: 20px; height: 20px; border-radius: 50%; background: #ffb90a; left: 29px; top: 9px; }
.user-badge { position: absolute; width: 19px; height: 19px; border-radius: 50%; background: #dcdfe5; color: #4a5768; left: 29px; top: 9px; padding: 1px; }
.zhu { position: absolute; border-radius: 50%; background: #8d6e63; color: #fff; text-align: center; }
.z1 { width: 19px; height: 19px; left: 29px; top: 9px; font-size: 8px; line-height: 19px; color: #ddd; }
.z2 { width: 15px; height: 15px; left: 28px; top: 30px; font-size: 7px; line-height: 15px; }
.tray { display: flex; align-items: center; margin-left: auto; padding-right: 24px; }
.t2 { margin-left: 11px; }
.ime { font-size: 19px; width: 20px; margin-left: 15px; line-height: 24px; }
.t3 { margin-left: 20px; } .t4 { margin-left: 10px; } .t5 { margin-left: 10px; }
.clock { display: flex; flex-direction: column; align-items: flex-end; width: 85px; white-space: nowrap; padding-bottom: 1px; }
.notif { width: 20px; height: 20px; border-radius: 50%; background: #4cc2ff; color: #111; text-align: center; margin-left: 15px; font-size: 13px; }

/* file dialog */
.dialog { position: absolute; left: 8px; top: 0; width: 944px; height: 592px; border: 1px solid #9a9a9a; border-radius: 10px; background: #fff; overflow: hidden; display: flex; flex-direction: column; white-space: nowrap; }
.desktop::before { content: ""; position: absolute; left: 8px; top: 0; width: 944px; height: 592px; border-radius: 10px; box-shadow: 0 34px 64px rgba(0,0,0,.28), 0 4px 34px rgba(0,0,0,.14); }
.cjk { font-weight: 300; margin-top: -2px; }
.lat { margin-top: -2px; }
.title { height: 36px; flex: none; display: flex; align-items: center; padding-left: 9px; font-size: 15px; color: #000; }
.logo { position: relative; margin-right: 5px; }
.logo i { position: absolute; right: 0; bottom: 0; width: 10px; height: 10px; border-radius: 50%; background: #dcdfe5; color: #4a5768; padding: 1px; }
.close { margin: 0 14px 0 auto; }
.nav { height: 66px; flex: none; display: flex; align-items: center; }
.n1 { margin-left: 18px; } .n2 { margin-left: 30px; } .n3 { margin-left: 25px; } .n4 { margin-left: 23px; }
.path, .find { height: 44px; border: 1px solid #d9d9d9; display: flex; align-items: center; font-size: 15px; color: #111; }
.path { width: 493px; margin-left: 19px; padding-left: 12px; }
.s1 { margin: 0 11px 0 11px; } .s2 { margin: 0 10px; color: #333; }
.drop { margin: 3px 0 0 auto; } .reload { margin: 1px 15px 0 31px; }
.find { width: 253px; margin-left: 12px; padding-left: 17px; gap: 16px; color: #555; }
.cmd { height: 39px; flex: none; background: #f5f6f8; border-bottom: 1px solid #e3eaee; display: flex; align-items: center; padding: 0 19px 0 22px; font-size: 15px; color: #1e395b; }
.tri { border: 4.500px solid transparent; border-bottom: 0; border-top-color: #1e395b; margin-left: 5px; }
.newf { margin-left: 37px; }
.lines { margin-left: auto; } .tri.t { margin-left: 16px; } .pane { margin-left: 28px; }
.help { width: 20px; height: 20px; border-radius: 50%; background: #1683d3; color: #fff; text-align: center; margin-left: 27px; font-size: 15px; }
.body { height: 352px; flex: none; display: flex; }
.tree { width: 218px; height: 352px; list-style: none; padding: 2px 1px 0 3px; overflow: hidden; }
.tree li { display: flex; align-items: center; height: 32px; color: #111; font-size: 15px; }
.tree .sel { background: linear-gradient(#d9d9d9, #d9d9d9) 0 2px / 100% 28px no-repeat; }
.chev { width: 7px; height: 11px; margin-left: 20px; color: #7c7c7c; }
.ib { position: relative; width: 20px; height: 20px; margin: 0 5px 0 11px; display: flex; align-items: center; justify-content: center; flex: none; }
.flag { position: absolute; left: 0; top: 0; }
.ib .drv { margin-top: 2px; }
.tree-bar { width: 20px; background: #f0f0f0; padding: 170px 0 0 7px; }
.tree-bar i { display: block; width: 6px; height: 104px; background: #858585; }
.files { flex: 1; margin-left: 2px; box-shadow: inset 1px 0 0 #f0f0f0; display: grid; grid-template: 331px 21px / 682px 1fr; }
.list { padding-left: 9px; }
.cols { height: 32px; display: grid; grid-template-columns: 334px 180px 150px; font-size: 15px; color: #4c607a; font-weight: 300; }
.cols span { position: relative; border-right: 1px solid #e4e4e4; padding: 5px 0 0 7px; }
.cols span:first-child { padding-left: 31px; }
.cols svg { position: absolute; left: 85px; top: 1px; }
.group { display: flex; align-items: center; color: #24357a; font-size: 15px; padding-left: 3px; width: 663px; }
.group svg { color: #888; margin-right: 5px; }
.group hr { flex: 1; border: 0; border-top: 1px solid #e2e2e2; margin: 2px 0 0 9px; }
.g1 { height: 36px; padding-top: 2px; } .g2 { height: 30px; padding-top: 1px; } .g3 { height: 27px; padding-bottom: 1px; }
.file { height: 41px; display: grid; grid-template-columns: 42px 299px 180px 1fr; align-items: center; color: #666; width: 671px; font-size: 15px; }
.file svg { justify-self: center; margin-left: 11px; }
.file span { margin-top: -2px; }
.file.on { height: 35px; background: #cce8ff; border: 1px solid #99d1ff; width: 660px; margin-left: 12px; grid-template-columns: 29px 299px 180px 1fr; }
.file.on svg { margin-left: -1px; }
.nm { color: #111; }
.num { letter-spacing: .2px; }
.house { letter-spacing: .3px; }
.xl { letter-spacing: -.2px; }
.dt { letter-spacing: .25px; }
.fv { background: #f0f0f0; padding: 21px 0 0 7px; }
.fv i { display: block; width: 6px; height: 197px; background: #858585; }
.fh { background: #f0f0f0; margin-left: 3px; padding: 8px 0 0 21px; }
.fh i { display: block; width: 551px; height: 6px; background: #858585; }
.foot { position: relative; flex: 1; background: #f0f0f0; padding-top: 15px; }
.frow { display: flex; align-items: center; height: 28px; font-size: 15px; }
.frow label { width: 93px; margin: -2px 0 0 168px; }
.name, .kind { display: flex; align-items: center; justify-content: space-between; background: #fff; }
.name { width: 408px; height: 28px; border: 1px solid #7a7a7a; padding: 0 4px 0 3px; letter-spacing: .2px; }
.kind { width: 235px; height: 27px; margin: -1px 0 0 15px; border: 1px solid #dcdcdc; background: #fbfbfb; padding: 0 3px 0 4px; }
.name svg, .kind svg { color: #666; }
.fbtn { display: flex; gap: 17px; padding: 8px 0 0 685px; }
button { width: 108px; height: 31px; border: 1px solid #c9c9c9; border-radius: 5px; background: #fdfdfd; font: 15px/20px "Open Sans", "Noto Sans CJK TC Light", "Noto Sans CJK TC", sans-serif; padding: 0 0 2px; color: #111; }
.open { border: 1.500px solid #0c6fbf; background: #d8e6f1; }
.grip { position: absolute; right: 3px; bottom: 2px; }

/* red annotations */
.mark { position: absolute; border: 3px solid #e2575f; }
.m1 { left: 257px; top: 198px; width: 690px; height: 56px; border-color: rgba(220,50,60,.8); }
.m2 { left: 677px; top: 537px; width: 143px; height: 47px; }
.m3 { left: 763px; top: 410px; width: 4px; height: 5px; border-width: 0; background: #e2575f; }
```
